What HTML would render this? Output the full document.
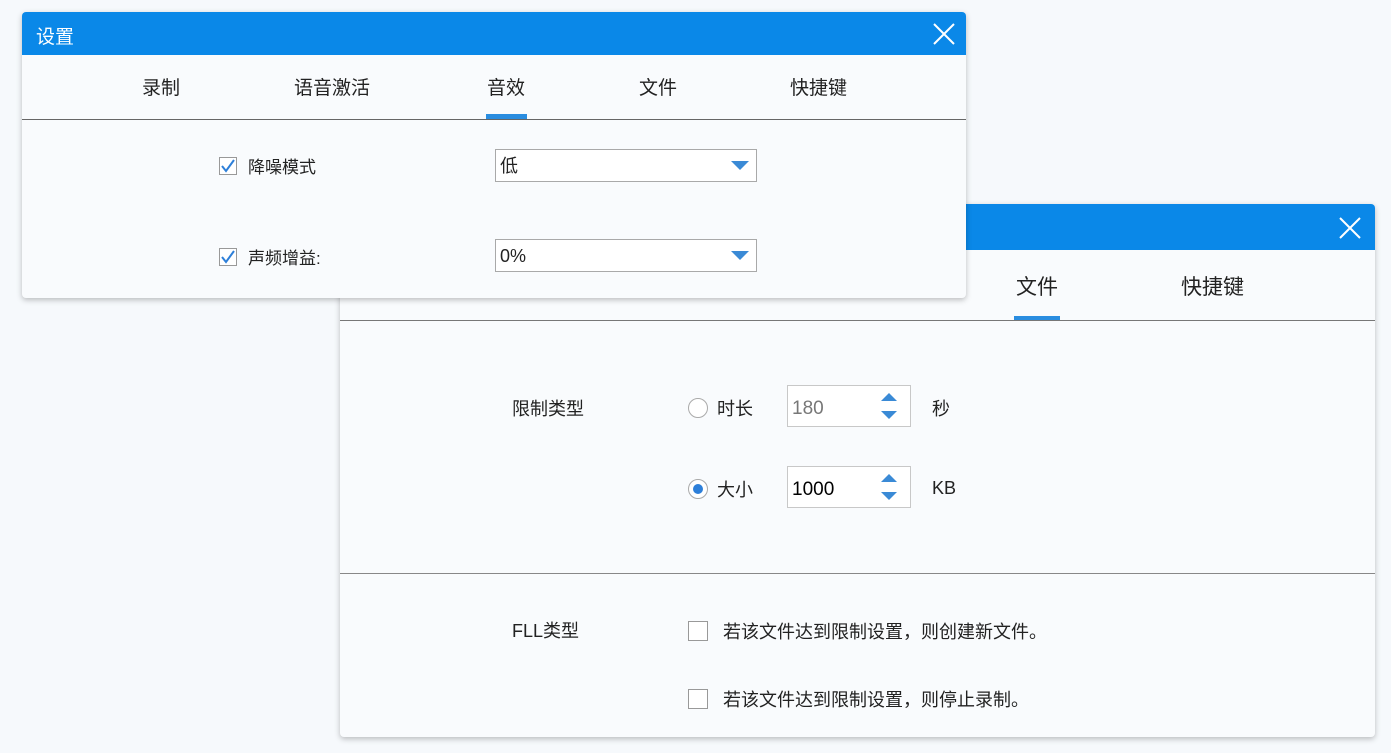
<!DOCTYPE html>
<html><head><meta charset="utf-8"><style>
*{margin:0;padding:0;box-sizing:border-box}
body{width:1391px;height:753px;background:#f6f9fc;position:relative;overflow:hidden;font-family:"Liberation Sans","Noto Sans CJK SC",sans-serif;color:#222}
.abs{position:absolute}
.dlg{position:absolute;background:#f9fbfd;box-shadow:0 2px 6px rgba(0,0,0,.25);border-radius:4px;overflow:hidden}
.bar{position:absolute;left:0;right:0;top:0;background:#0a88e8}
.t{position:absolute;white-space:nowrap}
.sel{position:absolute;background:#fff;border:1px solid #a9a9a9;font-size:18px;padding-left:4px;line-height:32px}
.cb{position:absolute;width:18px;height:18px;border:1px solid #999;background:#fff}
.box{position:absolute;width:20px;height:20px;border:1px solid #999;background:#fff}
.spin{position:absolute;width:124px;height:42px;background:#fff;border:1px solid #c8c8c8;font-size:19px;line-height:46px;padding-left:4px}
</style></head><body>

<div class="dlg" style="left:340px;top:204px;width:1035px;height:533px">
 <div class="bar" style="height:46px"></div>
 <svg class="abs" style="left:998px;top:12px" width="24" height="24"><path d="M2 2L22 22M22 2L2 22" stroke="#fff" stroke-width="2"/></svg>
 <div class="t" style="left:676px;top:67px;font-size:21px">文件</div>
 <div class="t" style="left:841px;top:67px;font-size:21px">快捷键</div>
 <div class="abs" style="left:674px;top:112px;width:46px;height:5px;background:#2a8de0"></div>
 <div class="abs" style="left:0;top:116px;width:1035px;height:1px;background:#777"></div>
 <div class="t" style="left:172px;top:191px;font-size:18px">限制类型</div>
 <div class="abs" style="left:348px;top:194px;width:20px;height:20px;border:1px solid #aaa;border-radius:50%;background:#fff"></div>
 <div class="t" style="left:377px;top:191px;font-size:18px">时长</div>
 <div class="spin" style="left:447px;top:181px;color:#777">180</div>
 <svg class="abs" style="left:540px;top:188px" width="18" height="28"><path d="M1 9L9 1L17 9Z M1 19L17 19L9 27Z" fill="#3a8ad6"/></svg>
 <div class="t" style="left:592px;top:191px;font-size:18px">秒</div>
 <div class="abs" style="left:348px;top:275px;width:20px;height:20px;border:1px solid #aaa;border-radius:50%;background:#fff"><div class="abs" style="left:4px;top:4px;width:10px;height:10px;border-radius:50%;background:#2d7fd9"></div></div>
 <div class="t" style="left:377px;top:272px;font-size:18px">大小</div>
 <div class="spin" style="left:447px;top:262px;color:#000">1000</div>
 <svg class="abs" style="left:540px;top:269px" width="18" height="28"><path d="M1 9L9 1L17 9Z M1 19L17 19L9 27Z" fill="#3a8ad6"/></svg>
 <div class="t" style="left:592px;top:274px;font-size:18px">KB</div>
 <div class="abs" style="left:0;top:369px;width:1035px;height:1px;background:#888"></div>
 <div class="t" style="left:172px;top:413px;font-size:18px">FLL类型</div>
 <div class="box" style="left:348px;top:417px"></div>
 <div class="t" style="left:383px;top:414px;font-size:18px">若该文件达到限制设置，则创建新文件。</div>
 <div class="box" style="left:348px;top:485px"></div>
 <div class="t" style="left:383px;top:482px;font-size:18px">若该文件达到限制设置，则停止录制。</div>
</div>

<div class="dlg" style="left:22px;top:12px;width:944px;height:286px;z-index:2">
 <div class="bar" style="height:43px"></div>
 <div class="t" style="left:14px;top:10px;font-size:19px;color:#fff">设置</div>
 <svg class="abs" style="left:911px;top:11px" width="22" height="22"><path d="M1 1L21 21M21 1L1 21" stroke="#fff" stroke-width="2"/></svg>
 <div class="t" style="left:120px;top:61px;font-size:19px">录制</div>
 <div class="t" style="left:272px;top:61px;font-size:19px">语音激活</div>
 <div class="t" style="left:465px;top:61px;font-size:19px">音效</div>
 <div class="t" style="left:617px;top:61px;font-size:19px">文件</div>
 <div class="t" style="left:768px;top:61px;font-size:19px">快捷键</div>
 <div class="abs" style="left:464px;top:102px;width:41px;height:5px;background:#2a8de0"></div>
 <div class="abs" style="left:0;top:107px;width:944px;height:1px;background:#666"></div>
 <div class="cb" style="left:197px;top:145px"></div>
 <svg class="abs" style="left:197px;top:145px" width="18" height="18"><path d="M3 9L7 14L15 3" stroke="#2d7fd9" stroke-width="2" fill="none"/></svg>
 <div class="t" style="left:226px;top:141px;font-size:17px">降噪模式</div>
 <div class="sel" style="left:473px;top:137px;width:262px;height:33px">低</div>
 <svg class="abs" style="left:709px;top:149px" width="18" height="10"><path d="M0 0L18 0L9 9Z" fill="#3a8ad6"/></svg>
 <div class="cb" style="left:197px;top:236px"></div>
 <svg class="abs" style="left:197px;top:236px" width="18" height="18"><path d="M3 9L7 14L15 3" stroke="#2d7fd9" stroke-width="2" fill="none"/></svg>
 <div class="t" style="left:226px;top:232px;font-size:17px">声频增益:</div>
 <div class="sel" style="left:473px;top:227px;width:262px;height:33px">0%</div>
 <svg class="abs" style="left:709px;top:239px" width="18" height="10"><path d="M0 0L18 0L9 9Z" fill="#3a8ad6"/></svg>
</div>
</body></html>
